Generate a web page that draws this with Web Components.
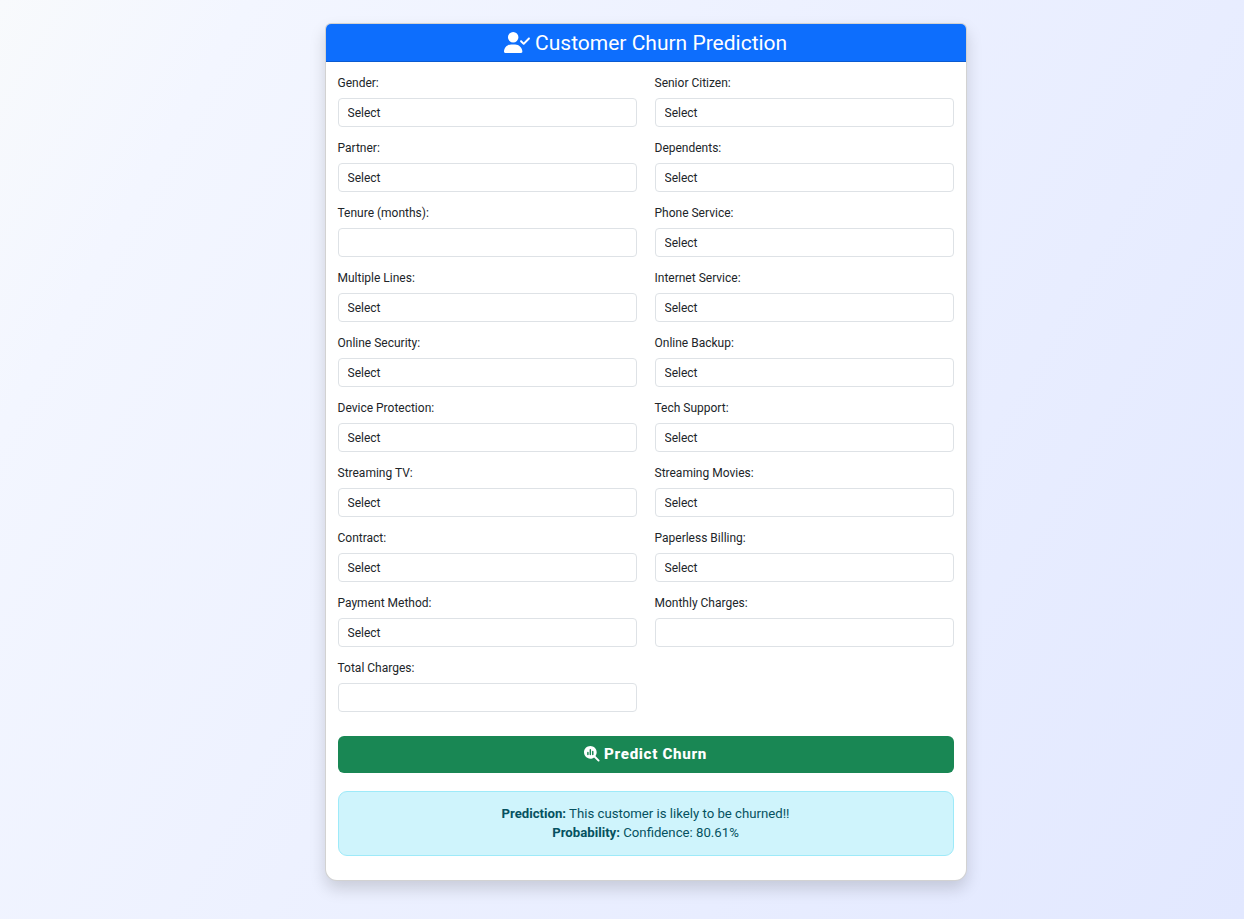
<!DOCTYPE html>
<html lang="en">
<head>
<meta charset="utf-8">
<title>Customer Churn Prediction</title>
<style>
html{height:100%}
body{margin:0;min-height:100%;background:linear-gradient(120deg,#f8fafc,#f3f6ff 14%,#e2e8ff);font-family:Roboto,"Liberation Sans",sans-serif;color:#212529}
</style>
</head>
<body>
<churn-page></churn-page>
<script>
const define = (name, html, setup) => customElements.define(name, class extends HTMLElement {
  constructor() {
    super();
    const t = document.createElement('template');
    t.innerHTML = html;
    this.attachShadow({mode: 'open'}).append(t.content.cloneNode(true));
  }
  connectedCallback() { if (setup) setup(this, this.shadowRoot); }
});

define('form-field', `
<style>
:host{display:block}
label{display:block;font-size:12px;line-height:18px;margin-bottom:6px}
select,input{appearance:none;display:block;box-sizing:border-box;width:100%;height:29px;margin:0;padding:0 9px;border:1px solid #dee2e6;border-radius:4px;background:#fff;color:#212529;font:12px/18px Roboto,"Liberation Sans",sans-serif}
</style>
<label for="c"><slot></slot></label><div id="box"></div>`, (host, root) => {
  const select = host.getAttribute('type') === 'select';
  root.getElementById('box').innerHTML = select
    ? '<select id="c"><option>Select</option></select>'
    : '<input id="c" type="text">';
});

define('submit-button', `
<style>
:host{display:block}
button{display:flex;align-items:center;justify-content:center;gap:4.5px;width:100%;height:37px;padding:0 0 1px;border:0;border-radius:6px;background:#198754;color:#fff;font:800 15.2px/24px Roboto,"Liberation Sans",sans-serif;letter-spacing:.66px}
svg{width:15.6px;height:15.6px;fill:currentColor}
</style>
<button type="button"><svg viewBox="0 0 512 512"><path d="M416 208c0 45.9-14.9 88.3-40 122.7L502.6 457.4c12.5 12.5 12.5 32.8 0 45.3s-32.8 12.5-45.3 0L330.7 376c-34.4 25.2-76.8 40-122.7 40C93.1 416 0 322.9 0 208S93.1 0 208 0S416 93.1 416 208zm-312 8v64c0 13.3 10.7 24 24 24s24-10.7 24-24V216c0-13.3-10.7-24-24-24s-24 10.7-24 24zm80-96V280c0 13.3 10.7 24 24 24s24-10.7 24-24V120c0-13.3-10.7-24-24-24s-24 10.7-24 24zm80 64v96c0 13.3 10.7 24 24 24s24-10.7 24-24V184c0-13.3-10.7-24-24-24s-24 10.7-24 24z"/></svg><span><slot></slot></span></button>`);

define('result-alert', `
<style>
:host{display:block;box-sizing:border-box;height:65px;padding:12px 16px;border:1px solid #9eeaf9;border-radius:9px;background:#cff4fc;color:#055160;font-size:13.2px;line-height:19px;text-align:center}
</style>
<slot></slot>`);

define('card-header', `
<style>
:host{display:flex;align-items:center;justify-content:center;gap:5px;box-sizing:border-box;height:38px;border-bottom:1px solid rgba(0,0,0,.176);border-radius:5px 5px 0 0;background:#0d6efd;color:#fff}
svg{width:26.25px;height:21px;margin-bottom:1px;fill:currentColor}
h1{margin:0;padding-top:1px;font-size:21px;line-height:26px;font-weight:400}
</style>
<svg viewBox="0 0 640 512"><path d="M96 128a128 128 0 1 1 256 0A128 128 0 1 1 96 128zM0 482.3C0 383.8 79.8 304 178.3 304h91.4C368.2 304 448 383.8 448 482.3c0 16.4-13.3 29.7-29.7 29.7H29.7C13.3 512 0 498.7 0 482.3zM625 177L497 305c-9.4 9.4-24.6 9.4-33.9 0l-64-64c-9.4-9.4-9.4-24.6 0-33.9s24.6-9.4 33.9 0l47 47L591 143c9.4-9.4 24.6-9.4 33.9 0s9.4 24.6 0 33.9z"/></svg><h1><slot></slot></h1>`);

define('form-card', `
<style>
:host{display:block;box-sizing:border-box;width:642px;height:858px;border:1px solid rgba(0,0,0,.176);border-radius:6px 6px 12px 12px;background:#fff;box-shadow:0 8px 16px rgba(0,0,0,.15)}
.body{padding:12px}
</style>
<slot name="header"></slot><div class="body"><slot></slot></div>`);

define('churn-page', `
<style>
:host{display:flex;justify-content:center;box-sizing:border-box;min-height:919px;padding:23px 0 38px 47px}
.fields{display:grid;grid-template-columns:1fr 1fr;column-gap:18px;row-gap:12px;margin-bottom:24px}
submit-button{margin-bottom:18px}
</style>
<form-card>
<card-header slot="header">Customer Churn Prediction</card-header>
<div class="fields">
<form-field type="select">Gender:</form-field><form-field type="select">Senior Citizen:</form-field>
<form-field type="select">Partner:</form-field><form-field type="select">Dependents:</form-field>
<form-field>Tenure (months):</form-field><form-field type="select">Phone Service:</form-field>
<form-field type="select">Multiple Lines:</form-field><form-field type="select">Internet Service:</form-field>
<form-field type="select">Online Security:</form-field><form-field type="select">Online Backup:</form-field>
<form-field type="select">Device Protection:</form-field><form-field type="select">Tech Support:</form-field>
<form-field type="select">Streaming TV:</form-field><form-field type="select">Streaming Movies:</form-field>
<form-field type="select">Contract:</form-field><form-field type="select">Paperless Billing:</form-field>
<form-field type="select">Payment Method:</form-field><form-field>Monthly Charges:</form-field>
<form-field>Total Charges:</form-field>
</div>
<submit-button>Predict Churn</submit-button>
<result-alert><b>Prediction:</b> This customer is likely to be churned!!<br><b>Probability:</b> Confidence: 80.61%</result-alert>
</form-card>`);
</script>
</body>
</html>
